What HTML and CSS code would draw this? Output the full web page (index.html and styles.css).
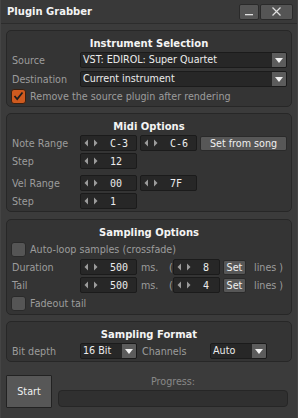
FILE: index.html
```html
<!DOCTYPE html>
<html>
<head>
<meta charset="utf-8">
<link rel="stylesheet" href="styles.css">
</head>
<body>
<div class="win">
  <div class="titlebar">
    <span class="wtitle">Plugin Grabber</span>
    <div class="wbtns">
      <div class="wbtn wmin"><svg width="8" height="8" viewBox="0 0 8 8"><rect x="0" y="6" width="8" height="1.3" fill="#e0e0e0"/></svg></div>
      <div class="wbtn wclose"><svg width="9" height="9" viewBox="0 0 9 9"><path d="M0.5 0.5 L8.5 8.5 M8.5 0.5 L0.5 8.5" stroke="#e0e0e0" stroke-width="1.2" fill="none"/></svg></div>
    </div>
  </div>
  <div class="body">
    <section class="panel p1">
      <div class="ptitle">Instrument Selection</div>
      <div class="row">
        <span class="lbl">Source</span>
        <div class="dd dd-wide"><span class="ddtext">VST: EDIROL: Super Quartet</span><span class="ddbtn"><svg width="8" height="5" viewBox="0 0 8 5"><polygon points="0,0 8,0 4,5" fill="#f2f2f2"/></svg></span></div>
      </div>
      <div class="row row-g3">
        <span class="lbl">Destination</span>
        <div class="dd dd-wide"><span class="ddtext">Current instrument</span><span class="ddbtn"><svg width="8" height="5" viewBox="0 0 8 5"><polygon points="0,0 8,0 4,5" fill="#f2f2f2"/></svg></span></div>
      </div>
      <div class="row row-g1">
        <span class="cb cb-on"><svg width="11" height="10" viewBox="0 0 11 10"><path d="M1.5 5 L4.2 8 L9.5 1.5" stroke="#1e1e1e" stroke-width="1.8" fill="none"/></svg></span>
        <span class="cbtext">Remove the source plugin after rendering</span>
      </div>
    </section>

    <section class="panel p2">
      <div class="ptitle">Midi Options</div>
      <div class="row">
        <span class="lbl">Note Range</span>
        <div class="spin"><svg class="arr" width="14" height="8" viewBox="0 0 14 8"><polygon points="4,0.5 4,7.5 0.5,4" fill="#9c9c9c"/><polygon points="10,0.5 10,7.5 13.5,4" fill="#9c9c9c"/></svg><span class="val">C-3</span></div>
        <div class="spin sp-gap"><svg class="arr" width="14" height="8" viewBox="0 0 14 8"><polygon points="4,0.5 4,7.5 0.5,4" fill="#9c9c9c"/><polygon points="10,0.5 10,7.5 13.5,4" fill="#9c9c9c"/></svg><span class="val">C-6</span></div>
        <div class="btn btn-song">Set from song</div>
      </div>
      <div class="row row-g2">
        <span class="lbl">Step</span>
        <div class="spin"><svg class="arr" width="14" height="8" viewBox="0 0 14 8"><polygon points="4,0.5 4,7.5 0.5,4" fill="#9c9c9c"/><polygon points="10,0.5 10,7.5 13.5,4" fill="#9c9c9c"/></svg><span class="val">12</span></div>
      </div>
      <div class="row row-g6">
        <span class="lbl">Vel Range</span>
        <div class="spin"><svg class="arr" width="14" height="8" viewBox="0 0 14 8"><polygon points="4,0.5 4,7.5 0.5,4" fill="#9c9c9c"/><polygon points="10,0.5 10,7.5 13.5,4" fill="#9c9c9c"/></svg><span class="val">00</span></div>
        <div class="spin sp-gap"><svg class="arr" width="14" height="8" viewBox="0 0 14 8"><polygon points="4,0.5 4,7.5 0.5,4" fill="#9c9c9c"/><polygon points="10,0.5 10,7.5 13.5,4" fill="#9c9c9c"/></svg><span class="val">7F</span></div>
      </div>
      <div class="row row-g2">
        <span class="lbl">Step</span>
        <div class="spin"><svg class="arr" width="14" height="8" viewBox="0 0 14 8"><polygon points="4,0.5 4,7.5 0.5,4" fill="#9c9c9c"/><polygon points="10,0.5 10,7.5 13.5,4" fill="#9c9c9c"/></svg><span class="val">1</span></div>
      </div>
    </section>

    <section class="panel p3">
      <div class="ptitle">Sampling Options</div>
      <div class="row">
        <span class="cb"></span>
        <span class="cbtext">Auto-loop samples (crossfade)</span>
      </div>
      <div class="row row-g2">
        <span class="lbl">Duration</span>
        <div class="spin"><svg class="arr" width="14" height="8" viewBox="0 0 14 8"><polygon points="4,0.5 4,7.5 0.5,4" fill="#9c9c9c"/><polygon points="10,0.5 10,7.5 13.5,4" fill="#9c9c9c"/></svg><span class="val">500</span></div>
        <span class="unit">ms.</span>
        <span class="paren">(</span>
        <div class="spin spin-sm"><svg class="arr" width="14" height="8" viewBox="0 0 14 8"><polygon points="4,0.5 4,7.5 0.5,4" fill="#9c9c9c"/><polygon points="10,0.5 10,7.5 13.5,4" fill="#9c9c9c"/></svg><span class="val">8</span></div>
        <div class="btn btn-set">Set</div>
        <span class="lines">lines )</span>
      </div>
      <div class="row row-g2">
        <span class="lbl">Tail</span>
        <div class="spin"><svg class="arr" width="14" height="8" viewBox="0 0 14 8"><polygon points="4,0.5 4,7.5 0.5,4" fill="#9c9c9c"/><polygon points="10,0.5 10,7.5 13.5,4" fill="#9c9c9c"/></svg><span class="val">500</span></div>
        <span class="unit">ms.</span>
        <span class="paren">(</span>
        <div class="spin spin-sm"><svg class="arr" width="14" height="8" viewBox="0 0 14 8"><polygon points="4,0.5 4,7.5 0.5,4" fill="#9c9c9c"/><polygon points="10,0.5 10,7.5 13.5,4" fill="#9c9c9c"/></svg><span class="val">4</span></div>
        <div class="btn btn-set">Set</div>
        <span class="lines">lines )</span>
      </div>
      <div class="row row-g2">
        <span class="cb"></span>
        <span class="cbtext">Fadeout tail</span>
      </div>
    </section>

    <section class="panel p4">
      <div class="ptitle">Sampling Format</div>
      <div class="row">
        <span class="lbl">Bit depth</span>
        <div class="dd dd-sm"><span class="ddtext">16 Bit</span><span class="ddbtn"><svg width="8" height="5" viewBox="0 0 8 5"><polygon points="0,0 8,0 4,5" fill="#f2f2f2"/></svg></span></div>
        <span class="lbl2">Channels</span>
        <div class="dd dd-sm"><span class="ddtext">Auto</span><span class="ddbtn"><svg width="8" height="5" viewBox="0 0 8 5"><polygon points="0,0 8,0 4,5" fill="#f2f2f2"/></svg></span></div>
      </div>
    </section>

    <div class="footer">
      <div class="btn btn-start">Start</div>
      <div class="prog">
        <div class="proglbl">Progress:</div>
        <div class="progbar"></div>
      </div>
    </div>
  </div>
</div>
</body>
</html>
```
FILE: styles.css
```css
* { box-sizing: border-box; }
html, body {
  margin: 0;
  padding: 0;
  width: 298px;
  height: 418px;
  overflow: hidden;
  background: #3b3b3b;
  font-family: "DejaVu Sans", "Liberation Sans", sans-serif;
  font-size: 9.6px;
  color: #9c9c9c;
}
.win {
  width: 298px;
  height: 418px;
  display: flex;
  flex-direction: column;
  background: #3b3b3b;
  border-left: 1px solid #444;
  border-right: 1px solid #444;
}
.titlebar {
  height: 24px;
  flex: none;
  display: flex;
  align-items: center;
  justify-content: space-between;
  background: #393939;
  border-bottom: 1px solid #2c2c2c;
  padding: 0 4px 0 6px;
}
.wtitle {
  color: #f4f4f4;
  font-weight: bold;
  font-size: 10px;
}
.wbtns {
  display: flex;
  gap: 1px;
  align-items: center;
}
.wbtn {
  height: 16px;
  background: #555;
  border: 1px solid #2a2a2a;
  border-radius: 2px;
  display: flex;
  align-items: center;
  justify-content: center;
}
.wmin { width: 20px; }
.wclose { width: 33px; }
.body {
  flex: 1;
  display: flex;
  flex-direction: column;
  padding: 6px 5px 0 5px;
}
.panel {
  background: #343434;
  border: 1px solid #272727;
  border-radius: 5px;
  padding: 4px 4px 2px 4px;
  display: flex;
  flex-direction: column;
}
.p2 { margin-top: 6px; }
.p3 { margin-top: 7px; padding-bottom: 3px; }
.p4 { margin-top: 6px; }
.ptitle {
  height: 17px;
  line-height: 17px;
  text-align: center;
  color: #f4f4f4;
  font-weight: bold;
  font-size: 10px;
}
.row {
  height: 16px;
  display: flex;
  align-items: center;
  white-space: nowrap;
}
.row-g1 { margin-top: 1px; }
.row-g2 { margin-top: 2px; }
.row-g3 { margin-top: 3px; }
.row-g6 { margin-top: 6px; }
.lbl {
  width: 69px;
  flex: none;
  padding-left: 1px;
}
.lbl2 {
  width: 73px;
  flex: none;
  padding-left: 5px;
}
.dd {
  height: 16px;
  display: flex;
  align-items: stretch;
  background: #272727;
  border: 1px solid #1b1b1b;
  border-radius: 2px;
  color: #ececec;
}
.dd-wide { width: 207px; }
.dd-sm { width: 57px; }
.ddtext {
  flex: 1;
  padding-left: 2px;
  line-height: 14px;
  overflow: hidden;
}
.ddbtn {
  width: 14px;
  flex: none;
  background: #5c5c5c;
  display: flex;
  align-items: center;
  justify-content: center;
  border-radius: 0 1px 1px 0;
}
.cb {
  width: 15px;
  height: 15px;
  flex: none;
  border-radius: 3px;
  background: #555;
  border: 1px solid #2a2a2a;
  display: flex;
  align-items: center;
  justify-content: center;
}
.cb-on {
  background: #cf5a1f;
  border-color: #3a2010;
}
.cbtext {
  margin-left: 4px;
}
.spin {
  width: 57px;
  height: 16px;
  flex: none;
  display: flex;
  align-items: center;
  background: #272727;
  border: 1px solid #1b1b1b;
  border-radius: 2px;
  padding-left: 3px;
  color: #ececec;
}
.spin-sm { width: 47px; }
.sp-gap { margin-left: 3px; }
.arr { flex: none; }
.val {
  margin-left: 12px;
  font-family: "DejaVu Sans Mono", monospace;
  font-size: 10px;
}
.btn {
  background: #575757;
  border: 1px solid #2a2a2a;
  border-radius: 2px;
  color: #f0f0f0;
  display: flex;
  align-items: center;
  justify-content: center;
}
.btn-song {
  width: 87px;
  height: 15px;
  margin-left: 3px;
}
.btn-set {
  width: 23px;
  height: 15px;
  margin-left: 3px;
}
.unit {
  width: 28px;
  flex: none;
  margin-left: 4px;
}
.paren {
  width: 4px;
  flex: none;
}
.lines {
  margin-left: 8px;
}
.footer {
  display: flex;
  margin-top: 13px;
  margin-right: 4px;
}
.btn-start {
  width: 46px;
  height: 33px;
  flex: none;
  border-color: #222;
  border-radius: 1px;
}
.prog {
  flex: 1;
  margin-left: 6px;
  display: flex;
  flex-direction: column;
}
.proglbl {
  height: 14px;
  line-height: 14px;
  text-align: center;
  color: #888;
}
.progbar {
  height: 17px;
  margin-top: 1px;
  background: #303030;
  border: 1px solid #262626;
  border-radius: 4px;
}
```
